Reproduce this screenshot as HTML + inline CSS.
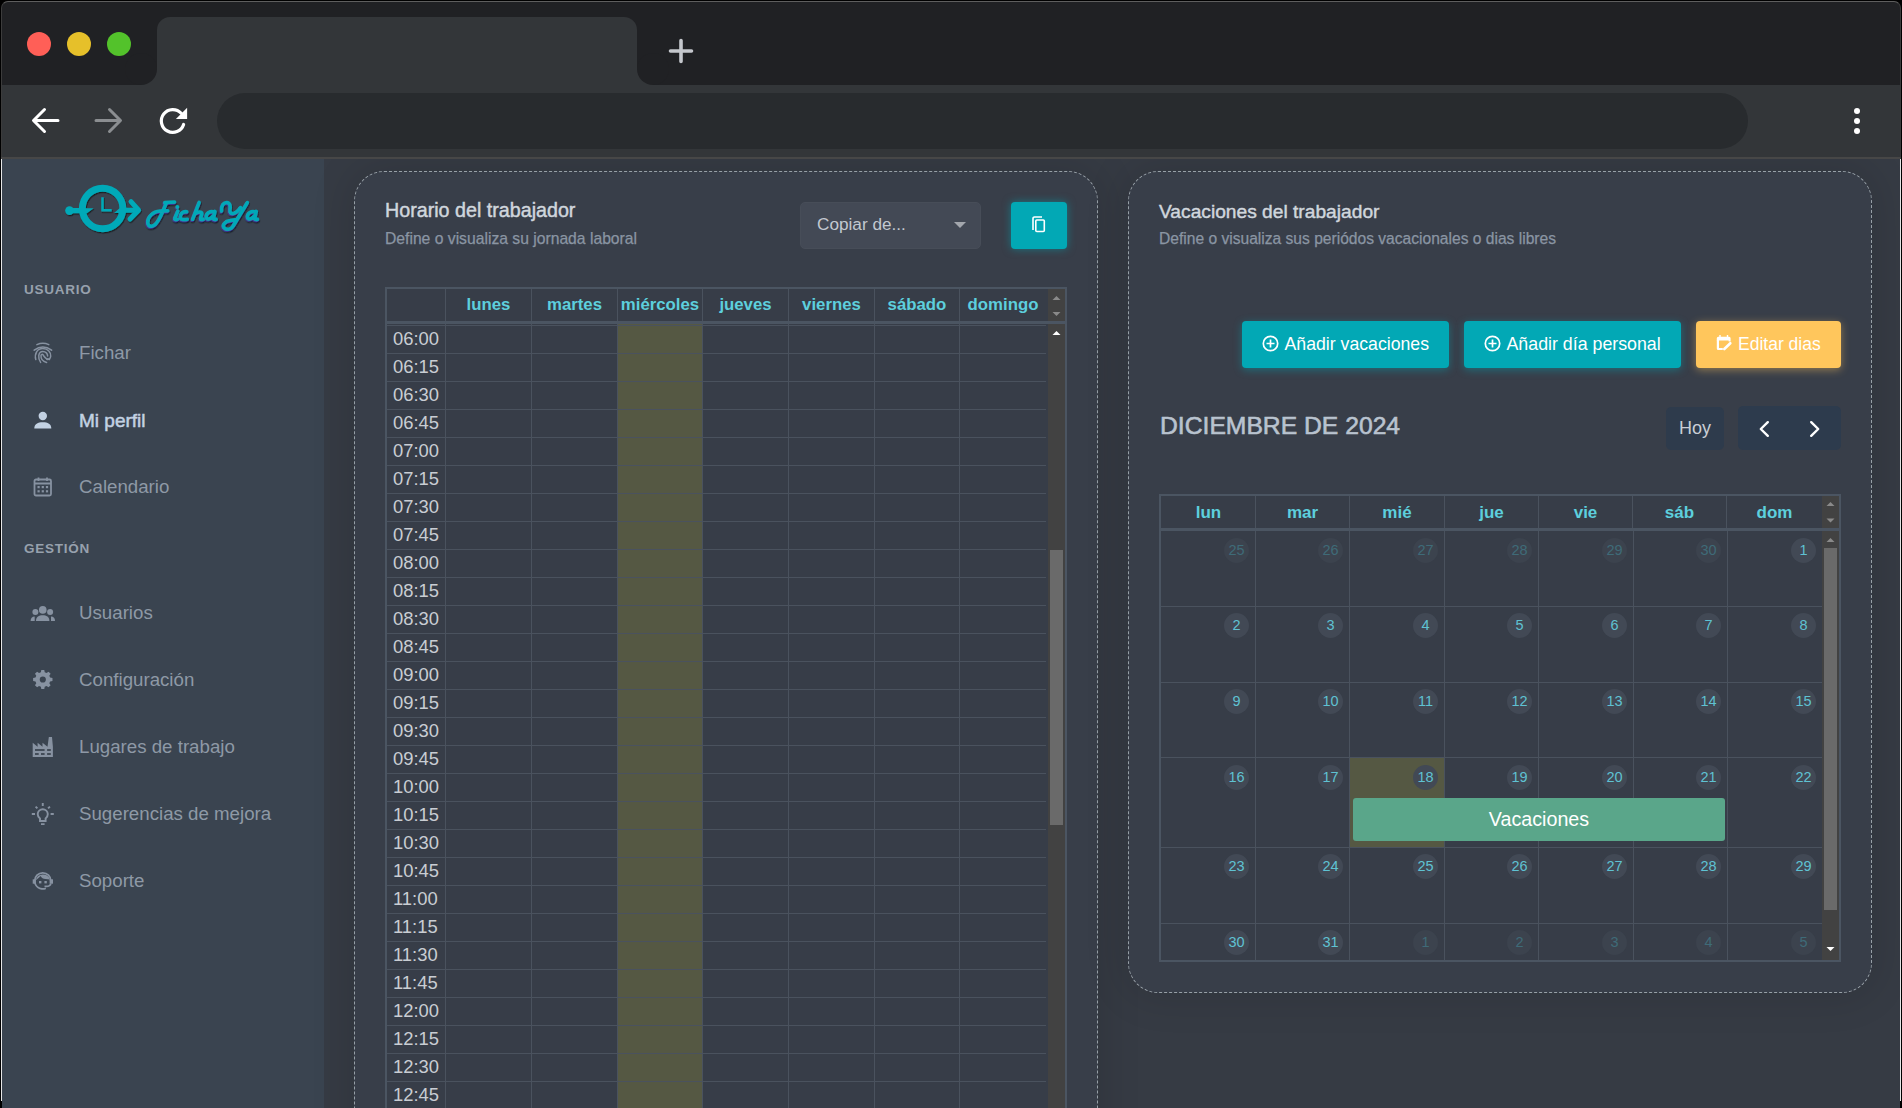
<!DOCTYPE html><html><head><meta charset="utf-8"><style>
*{box-sizing:border-box}
html,body{margin:0;padding:0}
body{width:1902px;height:1108px;background:#000;overflow:hidden;position:relative;font-family:"Liberation Sans",sans-serif}
.a{position:absolute}
.t{position:absolute;white-space:nowrap;line-height:1}
</style></head><body>

<div class="a" style="left:1px;top:1px;width:1900px;height:1107px;border-radius:7px 7px 0 0;background:#202124;overflow:hidden;border-top:1px solid #5e5e5e;border-left:1px solid #3c3c3c;border-right:1px solid #3c3c3c">
</div>
<div class="a" style="z-index:10;left:27px;top:32px;width:24px;height:24px;border-radius:50%;background:#ff5f57"></div>
<div class="a" style="z-index:10;left:67px;top:32px;width:24px;height:24px;border-radius:50%;background:#e6c02a"></div>
<div class="a" style="z-index:10;left:107px;top:32px;width:24px;height:24px;border-radius:50%;background:#53c22b"></div>
<div class="a" style="z-index:10;left:157px;top:17px;width:480px;height:70px;background:#333639;border-radius:13px 13px 0 0"></div>
<div class="a" style="z-index:10;left:141px;top:69px;width:16px;height:16px;background:#333639"></div><div class="a" style="z-index:10;left:125px;top:53px;width:32px;height:32px;border-radius:50%;background:#202124"></div>
<div class="a" style="z-index:10;left:637px;top:69px;width:16px;height:16px;background:#333639"></div><div class="a" style="z-index:10;left:637px;top:53px;width:32px;height:32px;border-radius:50%;background:#202124"></div>
<svg class="a" style="z-index:10;left:667px;top:37px" width="28" height="28" viewBox="0 0 28 28"><path d="M14 3.5V24.5M3.5 14H24.5" stroke="#c4c7cc" stroke-width="3.6" stroke-linecap="round"/></svg>
<div class="a" style="z-index:10;left:2px;top:85px;width:1898px;height:72px;background:#333639"></div>
<div class="a" style="z-index:10;left:1px;top:157px;width:1900px;height:2px;background:#474747"></div>
<div class="a" style="z-index:10;left:217px;top:93px;width:1531px;height:56px;border-radius:28px;background:#282b2e"></div>
<svg class="a" style="z-index:10;left:28px;top:104px" width="34" height="34" viewBox="0 0 34 34"><path d="M30 16.5H6M16.5 5.5L5.5 16.5L16.5 27.5" fill="none" stroke="#fff" stroke-width="3" stroke-linecap="round" stroke-linejoin="round"/></svg>
<svg class="a" style="z-index:10;left:92px;top:104px" width="34" height="34" viewBox="0 0 34 34"><path d="M4 16.5H28M17.5 5.5L28.5 16.5L17.5 27.5" fill="none" stroke="#8b8e91" stroke-width="3" stroke-linecap="round" stroke-linejoin="round"/></svg>
<svg class="a" style="z-index:10;left:156px;top:104px" width="34" height="34" viewBox="0 0 34 34"><path d="M27.6 20.4A11.4 11.4 0 1 1 25.2 9.3" fill="none" stroke="#fff" stroke-width="3.2" stroke-linecap="round"/><path d="M31.1 3.7V15H19.9Z" fill="#fff"/></svg>
<div class="a" style="z-index:10;left:1854px;top:108px;width:6px;height:6px;border-radius:50%;background:#fff"></div>
<div class="a" style="z-index:10;left:1854px;top:118px;width:6px;height:6px;border-radius:50%;background:#fff"></div>
<div class="a" style="z-index:10;left:1854px;top:128px;width:6px;height:6px;border-radius:50%;background:#fff"></div>
<div class="a" style="left:2px;top:159px;width:1898px;height:949px;background:#363b44"></div>
<div class="a" style="left:1px;top:159px;width:1px;height:949px;background:#e6e6e6"></div>
<div class="a" style="left:1900px;top:159px;width:1px;height:942px;background:#e6e6e6"></div>
<div class="a" style="left:2px;top:159px;width:322px;height:949px;background:#3a4450"></div>
<svg class="a" style="left:40px;top:180px" width="240" height="60" viewBox="40 180 240 60">
<defs><filter id="sh" x="-20%" y="-30%" width="140%" height="160%"><feDropShadow dx="0.8" dy="1.2" stdDeviation="0.7" flood-color="#0c0f14" flood-opacity="0.75"/></filter>
<filter id="sh2" x="-20%" y="-30%" width="140%" height="160%"><feDropShadow dx="-0.6" dy="1" stdDeviation="0.2" flood-color="#4a3fc0" flood-opacity="0.6"/><feDropShadow dx="0.6" dy="1.4" stdDeviation="0.6" flood-color="#0c0f14" flood-opacity="0.7"/></filter></defs>
<g filter="url(#sh)" fill="#03a9b8" stroke="#03a9b8">
<circle cx="102.6" cy="208.5" r="20.25" fill="none" stroke-width="6.9"/>
<path d="M69.5 210.6H80M125 210.3H137" stroke-width="5.1" fill="none"/>
<circle cx="69.5" cy="210.6" r="4.3" stroke="none"/>
<path d="M131 201.6L138.6 210.2L130 219" stroke-width="5" fill="none" stroke-linecap="round" stroke-linejoin="round"/>
<path d="M102.5 197.3V210.3H111.7" stroke-width="2.5" fill="none"/>
<path d="M85 208.2H93.6L87 213.2H85Z M114 213H120.5V208.2H119.6Z" stroke="none"/>
</g>
<g filter="url(#sh2)" fill="none" stroke="#03a9b8" stroke-width="3.5" stroke-linecap="round" stroke-linejoin="round">
<path d="M164.8 202.6L174.6 202.1"/>
<path d="M166.2 203C163.5 210 160.5 218 156.5 223C153.5 227 148.5 227.5 147.8 223C147 217.5 152.5 211.5 160 211L167.8 210.7"/>
<path d="M177.9 211L174.8 218.3C174.5 219.5 175.5 219.8 177.5 219.4"/>
<circle cx="177.4" cy="206.9" r="1.9" fill="#03a9b8" stroke="none"/>
<path d="M186.8 211.8C182.5 210.8 180.3 214.5 180.3 217C180.3 219.6 183.5 220 187.3 219.2"/>
<path d="M199.2 202.4L192.6 219.3M194.6 214.3C196.5 211.8 202.3 210.8 201.9 213.8L200.6 218.5C200.4 219.6 201.8 219.8 203.2 219.4"/>
<path d="M214.3 212C210 210.6 206.2 213 206.2 216.8C206.2 220 210 219.6 213 216M215 211.4L213.5 218.4C213.3 219.5 214.8 219.7 216.2 219.3"/>
<path d="M221.6 211C221 205.5 223.8 202.2 226.8 202.4C230 202.6 230.6 206 230 209.2C229.4 212.6 231 214 233.6 213.4C236 212.8 238.5 210.5 240.5 207.5"/>
<path d="M247.4 202.5L233.2 226C231.2 229.6 226.2 230.2 224 227.6C222 225 225 221.2 230 220.6L236.5 219.6"/>
<path d="M255.6 212C251.2 210.6 247.4 213 247.4 216.8C247.4 220 251.2 219.6 254.2 216M256.3 211.4L254.8 218.4C254.6 219.5 256.1 219.7 257.5 219.3"/>
</g>
</svg>
<div class="t" style="left:24px;top:282.7px;font-size:13.5px;color:#97a1ad;font-weight:700;letter-spacing:0.75px;-webkit-text-stroke:0px #97a1ad">USUARIO</div>
<div class="t" style="left:24px;top:541.7px;font-size:13.5px;color:#97a1ad;font-weight:700;letter-spacing:0.75px;-webkit-text-stroke:0px #97a1ad">GESTIÓN</div>
<svg class="a" style="left:29px;top:340px" width="28" height="24" viewBox="0 0 28 24"><g fill="none" stroke="#8792a1" stroke-width="1.5" stroke-linecap="round"><path d="M7.9 4.6Q13.8 2 19.8 4.6"/><path d="M5.2 10.2Q13.8 3.6 22.6 10.2"/><path d="M6.8 19.6C5.2 13.5 8.3 8.6 13.8 8.6C19 8.6 22 12.2 21.7 16.2C21.5 18.8 19.5 19.8 17.8 19.2"/><path d="M11.6 22.4C8.8 18.8 8.8 11.6 13.8 11.6C16.8 11.6 18.7 13.6 18.6 16"/><path d="M17.6 22.4C13.4 21.4 11.8 18.2 12 15.4C12.2 14.2 13.4 14 14.2 15C15.2 16.4 15.6 18.8 20.5 19.6"/></g></svg>
<div class="t" style="left:79px;top:344.1px;font-size:18.7px;color:#8e99a6;font-weight:400;letter-spacing:0px;-webkit-text-stroke:0px #8e99a6">Fichar</div>
<svg class="a" style="left:29px;top:407px" width="28" height="24" viewBox="0 0 28 24"><circle cx="13.8" cy="9" r="4.2" fill="#c3d2e3"/><path d="M5.3 21.5C5.3 16.8 8.8 15.2 13.8 15.2S22.3 16.8 22.3 21.5Z" fill="#c3d2e3"/></svg>
<div class="t" style="left:79px;top:411.0px;font-size:19.0px;color:#c3d2e3;font-weight:400;letter-spacing:0px;-webkit-text-stroke:0.5px #c3d2e3">Mi perfil</div>
<svg class="a" style="left:29px;top:474px" width="28" height="24" viewBox="0 0 28 24"><rect x="5.5" y="5.5" width="16.5" height="16" rx="1.5" fill="none" stroke="#8792a1" stroke-width="1.8"/><path d="M5.5 9.5H22" stroke="#8792a1" stroke-width="2"/><path d="M9.5 3.5V7M18 3.5V7" stroke="#8792a1" stroke-width="1.8"/><g fill="#8792a1"><rect x="8.5" y="12" width="2.2" height="2.2"/><rect x="12.7" y="12" width="2.2" height="2.2"/><rect x="16.9" y="12" width="2.2" height="2.2"/><rect x="8.5" y="16.2" width="2.2" height="2.2"/><rect x="12.7" y="16.2" width="2.2" height="2.2"/><rect x="16.9" y="16.2" width="2.2" height="2.2"/></g></svg>
<div class="t" style="left:79px;top:478.1px;font-size:18.7px;color:#8e99a6;font-weight:400;letter-spacing:0px;-webkit-text-stroke:0px #8e99a6">Calendario</div>
<svg class="a" style="left:29px;top:600px" width="28" height="24" viewBox="0 0 28 24"><g fill="#8792a1"><circle cx="13.76" cy="9.9" r="3.8"/><circle cx="6.4" cy="11.9" r="3"/><circle cx="21.1" cy="11.9" r="3"/><path d="M7 21C7 16.6 10 15.3 13.7 15.3S20.4 16.6 20.4 21Z"/><path d="M1.6 21C1.6 18.2 3 16.5 5.7 16.5V21Z"/><path d="M26 21C26 18.2 24.6 16.5 22 16.5V21Z"/></g></svg>
<div class="t" style="left:79px;top:604.1px;font-size:18.7px;color:#8e99a6;font-weight:400;letter-spacing:0px;-webkit-text-stroke:0px #8e99a6">Usuarios</div>
<svg class="a" style="left:29px;top:667px" width="28" height="24" viewBox="0 0 28 24"><path fill="#8792a1" fill-rule="evenodd" d="M8.3 1H11.7L12.2 3.6L14.3 4.5L16.5 3L18.9 5.4L17.4 7.6L18.3 9.7L21 10.2V13.6L18.3 14.1L17.4 16.2L18.9 18.4L16.5 20.8L14.3 19.3L12.2 20.2L11.7 22.8H8.3L7.8 20.2L5.7 19.3L3.5 20.8L1.1 18.4L2.6 16.2L1.7 14.1L-1 13.6V10.2L1.7 9.7L2.6 7.6L1.1 5.4L3.5 3L5.7 4.5L7.8 3.6Z M10 8.4A3.5 3.5 0 1 0 10 15.4A3.5 3.5 0 1 0 10 8.4Z" transform="translate(5 2) scale(0.88)"/></svg>
<div class="t" style="left:79px;top:671.1px;font-size:18.7px;color:#8e99a6;font-weight:400;letter-spacing:0px;-webkit-text-stroke:0px #8e99a6">Configuración</div>
<svg class="a" style="left:29px;top:734px" width="28" height="24" viewBox="0 0 28 24"><path fill="#8792a1" d="M3.7 22.9V8.8L8.6 12.8V8.8L13.5 12.8V8.8L18.5 12.8L19.85 3H23L23.9 12.8V22.9Z"/><g fill="#343c47"><rect x="6" y="15.2" width="9.6" height="1.6"/><rect x="18.1" y="15.2" width="3.7" height="1.6"/><rect x="6" y="19.2" width="3.7" height="1.6"/><rect x="12" y="19.2" width="3.6" height="1.6"/><rect x="18.1" y="19.2" width="3.7" height="1.6"/></g></svg>
<div class="t" style="left:79px;top:738.1px;font-size:18.7px;color:#8e99a6;font-weight:400;letter-spacing:0px;-webkit-text-stroke:0px #8e99a6">Lugares de trabajo</div>
<svg class="a" style="left:29px;top:801px" width="28" height="24" viewBox="0 0 28 24"><g fill="none" stroke="#8792a1" stroke-width="1.9"><path d="M11 20V17.5C9.5 16.3 8.7 14.8 8.7 13A5.06 5.06 0 0 1 18.8 13C18.8 14.8 18 16.3 16.6 17.5V20Z"/><path d="M12 23.2H15.6"/><path d="M13.76 2V5M2.8 13H6M21.6 13H24.8M6.6 5.6L8.4 7.4M20.9 5.6L19.1 7.4"/></g></svg>
<div class="t" style="left:79px;top:805.1px;font-size:18.7px;color:#8e99a6;font-weight:400;letter-spacing:0px;-webkit-text-stroke:0px #8e99a6">Sugerencias de mejora</div>
<svg class="a" style="left:29px;top:868px" width="28" height="24" viewBox="0 0 28 24"><g fill="#8792a1"><path d="M13.76 3.9A9 9 0 0 0 4.76 12.9A9 9 0 0 0 16.9 21.2V19.4A7.2 7.2 0 0 1 6.56 12.9A7.2 7.2 0 0 1 20.96 12.9H22.76A9 9 0 0 0 13.76 3.9Z"/><path d="M6.7 12.2C8.6 11 10 9.8 11.5 8C12.6 10 14.2 10.8 16.5 11L21 11.4A7.5 7.5 0 0 0 6.7 12.2Z"/><rect x="10" y="13" width="2.4" height="2.4"/><rect x="15.4" y="13" width="2.4" height="2.4"/><rect x="3.7" y="11.3" width="3.2" height="4.4"/><rect x="20.6" y="11.3" width="3.4" height="4.4"/><path d="M21 15.5C20.5 17.3 19 17.6 17.5 17.6H15.5V19.2H17.5C20 19.2 22.5 18 22.7 15.5Z"/></g></svg>
<div class="t" style="left:79px;top:872.1px;font-size:18.7px;color:#8e99a6;font-weight:400;letter-spacing:0px;-webkit-text-stroke:0px #8e99a6">Soporte</div>
<div class="a" style="left:354px;top:171px;width:744px;height:1000px;background:#383e49;border:1px dashed #97a0a7;border-radius:30px;box-shadow:0 0 40px 4px rgba(0,0,0,0.12)"></div>
<div class="a" style="left:1128px;top:171px;width:744px;height:822px;background:#383e49;border:1px dashed #97a0a7;border-radius:30px;box-shadow:0 0 40px 4px rgba(0,0,0,0.12)"></div>
<div class="t" style="left:385px;top:201.4px;font-size:19.7px;color:#d0d6dd;font-weight:400;letter-spacing:0px;-webkit-text-stroke:0.45px #d0d6dd">Horario del trabajador</div>
<div class="t" style="left:385px;top:230.5px;font-size:15.7px;color:#8a95a3;font-weight:400;letter-spacing:0px;-webkit-text-stroke:0.25px #8a95a3">Define o visualiza su jornada laboral</div>
<div class="a" style="left:800px;top:202px;width:181px;height:47px;background:#434955;border:1px solid #474d58;border-radius:5px"></div>
<div class="t" style="left:817px;top:215.8px;font-size:17.2px;color:#c2c8d0;font-weight:400;letter-spacing:0px;-webkit-text-stroke:0px #c2c8d0">Copiar de...</div>
<svg class="a" style="left:953px;top:221px" width="14" height="8" viewBox="0 0 14 8"><path d="M1 1H13L7 7Z" fill="#a3a7ad"/></svg>
<div class="a" style="left:1011px;top:202px;width:56px;height:47px;background:#02a8b5;border-radius:4px;box-shadow:0 0 8px rgba(2,168,181,0.55)"></div>
<svg class="a" style="left:1029px;top:215px" width="20" height="20" viewBox="0 0 20 20"><path d="M4 15V3.5A1.5 1.5 0 0 1 5.5 2H13" fill="none" stroke="#fff" stroke-width="1.6"/><rect x="6.8" y="5" width="8.5" height="11.5" rx="1" fill="none" stroke="#fff" stroke-width="1.6"/></svg>
<div class="a" style="left:385px;top:287px;width:682px;height:830px;border:2px solid #4b5562;border-bottom:none;background:#373d48"></div>
<div class="a" style="left:1048px;top:289px;width:17px;height:32px;background:#424242"></div>
<svg class="a" style="left:1051px;top:294px" width="11" height="24" viewBox="0 0 11 24"><path d="M1.5 6H9.5L5.5 2Z M1.5 18H9.5L5.5 22Z" fill="#8a8a8a"/></svg>
<div class="a" style="left:387px;top:321px;width:678px;height:3px;background:#4b5562"></div>
<div class="a" style="left:618px;top:324px;width:84px;height:800px;background:#555843"></div>
<div class="a" style="left:445px;top:289px;width:1px;height:32px;background:#4a525e"></div>
<div class="a" style="left:445px;top:324px;width:1px;height:800px;background:#4a525e"></div>
<div class="a" style="left:531px;top:289px;width:1px;height:32px;background:#4a525e"></div>
<div class="a" style="left:531px;top:324px;width:1px;height:800px;background:#4a525e"></div>
<div class="a" style="left:617px;top:289px;width:1px;height:32px;background:#4a525e"></div>
<div class="a" style="left:617px;top:324px;width:1px;height:800px;background:#4a525e"></div>
<div class="a" style="left:702px;top:289px;width:1px;height:32px;background:#4a525e"></div>
<div class="a" style="left:702px;top:324px;width:1px;height:800px;background:#4a525e"></div>
<div class="a" style="left:788px;top:289px;width:1px;height:32px;background:#4a525e"></div>
<div class="a" style="left:788px;top:324px;width:1px;height:800px;background:#4a525e"></div>
<div class="a" style="left:874px;top:289px;width:1px;height:32px;background:#4a525e"></div>
<div class="a" style="left:874px;top:324px;width:1px;height:800px;background:#4a525e"></div>
<div class="a" style="left:959px;top:289px;width:1px;height:32px;background:#4a525e"></div>
<div class="a" style="left:959px;top:324px;width:1px;height:800px;background:#4a525e"></div>
<div class="t" style="left:428.5px;width:120px;text-align:center;top:297px;font-size:16.8px;font-weight:700;color:#5dcfdd">lunes</div>
<div class="t" style="left:514.5px;width:120px;text-align:center;top:297px;font-size:16.8px;font-weight:700;color:#5dcfdd">martes</div>
<div class="t" style="left:600.0px;width:120px;text-align:center;top:297px;font-size:16.8px;font-weight:700;color:#5dcfdd">miércoles</div>
<div class="t" style="left:685.5px;width:120px;text-align:center;top:297px;font-size:16.8px;font-weight:700;color:#5dcfdd">jueves</div>
<div class="t" style="left:771.5px;width:120px;text-align:center;top:297px;font-size:16.8px;font-weight:700;color:#5dcfdd">viernes</div>
<div class="t" style="left:857.0px;width:120px;text-align:center;top:297px;font-size:16.8px;font-weight:700;color:#5dcfdd">sábado</div>
<div class="t" style="left:943.0px;width:120px;text-align:center;top:297px;font-size:16.8px;font-weight:700;color:#5dcfdd">domingo</div>
<div class="a" style="left:387px;top:325px;width:659px;height:1px;background:#4a525e"></div>
<div class="t" style="left:393px;top:329.8px;font-size:18.4px;color:#c9cdd3">06:00</div>
<div class="a" style="left:387px;top:353px;width:659px;height:1px;background:#4a525e"></div>
<div class="t" style="left:393px;top:357.8px;font-size:18.4px;color:#c9cdd3">06:15</div>
<div class="a" style="left:387px;top:381px;width:659px;height:1px;background:#4a525e"></div>
<div class="t" style="left:393px;top:385.8px;font-size:18.4px;color:#c9cdd3">06:30</div>
<div class="a" style="left:387px;top:409px;width:659px;height:1px;background:#4a525e"></div>
<div class="t" style="left:393px;top:413.8px;font-size:18.4px;color:#c9cdd3">06:45</div>
<div class="a" style="left:387px;top:437px;width:659px;height:1px;background:#4a525e"></div>
<div class="t" style="left:393px;top:441.8px;font-size:18.4px;color:#c9cdd3">07:00</div>
<div class="a" style="left:387px;top:465px;width:659px;height:1px;background:#4a525e"></div>
<div class="t" style="left:393px;top:469.8px;font-size:18.4px;color:#c9cdd3">07:15</div>
<div class="a" style="left:387px;top:493px;width:659px;height:1px;background:#4a525e"></div>
<div class="t" style="left:393px;top:497.8px;font-size:18.4px;color:#c9cdd3">07:30</div>
<div class="a" style="left:387px;top:521px;width:659px;height:1px;background:#4a525e"></div>
<div class="t" style="left:393px;top:525.8px;font-size:18.4px;color:#c9cdd3">07:45</div>
<div class="a" style="left:387px;top:549px;width:659px;height:1px;background:#4a525e"></div>
<div class="t" style="left:393px;top:553.8px;font-size:18.4px;color:#c9cdd3">08:00</div>
<div class="a" style="left:387px;top:577px;width:659px;height:1px;background:#4a525e"></div>
<div class="t" style="left:393px;top:581.8px;font-size:18.4px;color:#c9cdd3">08:15</div>
<div class="a" style="left:387px;top:605px;width:659px;height:1px;background:#4a525e"></div>
<div class="t" style="left:393px;top:609.8px;font-size:18.4px;color:#c9cdd3">08:30</div>
<div class="a" style="left:387px;top:633px;width:659px;height:1px;background:#4a525e"></div>
<div class="t" style="left:393px;top:637.8px;font-size:18.4px;color:#c9cdd3">08:45</div>
<div class="a" style="left:387px;top:661px;width:659px;height:1px;background:#4a525e"></div>
<div class="t" style="left:393px;top:665.8px;font-size:18.4px;color:#c9cdd3">09:00</div>
<div class="a" style="left:387px;top:689px;width:659px;height:1px;background:#4a525e"></div>
<div class="t" style="left:393px;top:693.8px;font-size:18.4px;color:#c9cdd3">09:15</div>
<div class="a" style="left:387px;top:717px;width:659px;height:1px;background:#4a525e"></div>
<div class="t" style="left:393px;top:721.8px;font-size:18.4px;color:#c9cdd3">09:30</div>
<div class="a" style="left:387px;top:745px;width:659px;height:1px;background:#4a525e"></div>
<div class="t" style="left:393px;top:749.8px;font-size:18.4px;color:#c9cdd3">09:45</div>
<div class="a" style="left:387px;top:773px;width:659px;height:1px;background:#4a525e"></div>
<div class="t" style="left:393px;top:777.8px;font-size:18.4px;color:#c9cdd3">10:00</div>
<div class="a" style="left:387px;top:801px;width:659px;height:1px;background:#4a525e"></div>
<div class="t" style="left:393px;top:805.8px;font-size:18.4px;color:#c9cdd3">10:15</div>
<div class="a" style="left:387px;top:829px;width:659px;height:1px;background:#4a525e"></div>
<div class="t" style="left:393px;top:833.8px;font-size:18.4px;color:#c9cdd3">10:30</div>
<div class="a" style="left:387px;top:857px;width:659px;height:1px;background:#4a525e"></div>
<div class="t" style="left:393px;top:861.8px;font-size:18.4px;color:#c9cdd3">10:45</div>
<div class="a" style="left:387px;top:885px;width:659px;height:1px;background:#4a525e"></div>
<div class="t" style="left:393px;top:889.8px;font-size:18.4px;color:#c9cdd3">11:00</div>
<div class="a" style="left:387px;top:913px;width:659px;height:1px;background:#4a525e"></div>
<div class="t" style="left:393px;top:917.8px;font-size:18.4px;color:#c9cdd3">11:15</div>
<div class="a" style="left:387px;top:941px;width:659px;height:1px;background:#4a525e"></div>
<div class="t" style="left:393px;top:945.8px;font-size:18.4px;color:#c9cdd3">11:30</div>
<div class="a" style="left:387px;top:969px;width:659px;height:1px;background:#4a525e"></div>
<div class="t" style="left:393px;top:973.8px;font-size:18.4px;color:#c9cdd3">11:45</div>
<div class="a" style="left:387px;top:997px;width:659px;height:1px;background:#4a525e"></div>
<div class="t" style="left:393px;top:1001.8px;font-size:18.4px;color:#c9cdd3">12:00</div>
<div class="a" style="left:387px;top:1025px;width:659px;height:1px;background:#4a525e"></div>
<div class="t" style="left:393px;top:1029.8px;font-size:18.4px;color:#c9cdd3">12:15</div>
<div class="a" style="left:387px;top:1053px;width:659px;height:1px;background:#4a525e"></div>
<div class="t" style="left:393px;top:1057.8px;font-size:18.4px;color:#c9cdd3">12:30</div>
<div class="a" style="left:387px;top:1081px;width:659px;height:1px;background:#4a525e"></div>
<div class="t" style="left:393px;top:1085.8px;font-size:18.4px;color:#c9cdd3">12:45</div>
<div class="a" style="left:1048px;top:324px;width:17px;height:790px;background:#424242"></div>
<svg class="a" style="left:1051px;top:328px" width="11" height="9" viewBox="0 0 11 9"><path d="M1.5 7H9.5L5.5 3Z" fill="#fff"/></svg>
<div class="a" style="left:1050px;top:550px;width:13px;height:275px;background:#6a6a6a"></div>
<div class="t" style="left:1159px;top:201.5px;font-size:19.2px;color:#d0d6dd;font-weight:400;letter-spacing:0px;-webkit-text-stroke:0.45px #d0d6dd">Vacaciones del trabajador</div>
<div class="t" style="left:1159px;top:230.5px;font-size:15.6px;color:#8a95a3;font-weight:400;letter-spacing:0px;-webkit-text-stroke:0.25px #8a95a3">Define o visualiza sus periódos vacacionales o dias libres</div>
<div class="a" style="left:1242px;top:321px;width:207px;height:47px;background:#02a8b5;border-radius:4px;box-shadow:0 2px 8px rgba(2,168,181,0.45)"></div>
<svg class="a" style="left:1262px;top:335px" width="17" height="17" viewBox="0 0 17 17"><circle cx="8.5" cy="8.5" r="7.2" fill="none" stroke="#fff" stroke-width="1.7"/><path d="M8.5 4.5V12.5M4.5 8.5H12.5" stroke="#fff" stroke-width="1.7"/></svg>
<div class="t" style="left:1284.5px;top:335.7px;font-size:17.7px;color:#fff;font-weight:400;letter-spacing:0px;-webkit-text-stroke:0px #fff">Añadir vacaciones</div>
<div class="a" style="left:1464px;top:321px;width:217px;height:47px;background:#02a8b5;border-radius:4px;box-shadow:0 2px 8px rgba(2,168,181,0.45)"></div>
<svg class="a" style="left:1484px;top:335px" width="17" height="17" viewBox="0 0 17 17"><circle cx="8.5" cy="8.5" r="7.2" fill="none" stroke="#fff" stroke-width="1.7"/><path d="M8.5 4.5V12.5M4.5 8.5H12.5" stroke="#fff" stroke-width="1.7"/></svg>
<div class="t" style="left:1506.5px;top:335.7px;font-size:17.8px;color:#fff;font-weight:400;letter-spacing:0px;-webkit-text-stroke:0px #fff">Añadir día personal</div>
<div class="a" style="left:1696px;top:321px;width:145px;height:47px;background:#ffc65c;border-radius:4px;box-shadow:0 2px 8px rgba(255,198,92,0.45)"></div>
<svg class="a" style="left:1715px;top:333px" width="18" height="19" viewBox="0 0 18 19"><g fill="#fff"><path d="M1.8 8V5.2Q1.8 3.7 3.3 3.7H14.1Q15.6 3.7 15.6 5.2V8.6H13.6V7.5H1.8Z"/><rect x="4.3" y="2" width="1.4" height="2.5"/><rect x="11.8" y="2" width="1.4" height="2.5"/><path d="M1.8 7H4V15H7.8V17H3.3Q1.8 17 1.8 15.5Z"/></g><path d="M9.3 16L15.3 10.2" stroke="#fff" stroke-width="2.6" stroke-linecap="round"/></svg>
<div class="t" style="left:1738px;top:335.7px;font-size:17.5px;color:#fff;font-weight:400;letter-spacing:0px;-webkit-text-stroke:0px #fff">Editar dias</div>
<div class="t" style="left:1160px;top:413.8px;font-size:24.7px;color:#b9c3cf;font-weight:400;letter-spacing:0px;-webkit-text-stroke:0.6px #b9c3cf">DICIEMBRE DE 2024</div>
<div class="a" style="left:1666px;top:407px;width:58px;height:43px;background:#2e3b4c;border-radius:5px"></div>
<div class="t" style="left:1679px;top:418.7px;font-size:18px;color:#c9ced5;font-weight:400;letter-spacing:0px;-webkit-text-stroke:0px #c9ced5">Hoy</div>
<div class="a" style="left:1738px;top:406px;width:103px;height:44px;background:#2d3b4d;border-radius:5px"></div>
<svg class="a" style="left:1754px;top:418px" width="20" height="22" viewBox="0 0 20 22"><path d="M13.8 4.2L6.8 11L13.8 17.8" fill="none" stroke="#fff" stroke-width="2.4" stroke-linecap="round" stroke-linejoin="round"/></svg>
<svg class="a" style="left:1805px;top:418px" width="20" height="22" viewBox="0 0 20 22"><path d="M6.2 4.2L13.2 11L6.2 17.8" fill="none" stroke="#fff" stroke-width="2.4" stroke-linecap="round" stroke-linejoin="round"/></svg>
<div class="a" style="left:1159px;top:494px;width:682px;height:468px;border:2px solid #4b5562;background:#373d48"></div>
<div class="a" style="left:1822px;top:496px;width:17px;height:32px;background:#424242"></div>
<svg class="a" style="left:1825px;top:500px" width="11" height="24" viewBox="0 0 11 24"><path d="M1.5 6H9.5L5.5 2Z M1.5 18.5H9.5L5.5 22.5Z" fill="#8a8a8a"/></svg>
<div class="a" style="left:1161px;top:528px;width:678px;height:3px;background:#4b5562"></div>
<div class="a" style="left:1350px;top:758px;width:94px;height:89px;background:#555843"></div>
<div class="a" style="left:1255px;top:496px;width:1px;height:32px;background:#4a525e"></div>
<div class="a" style="left:1349px;top:496px;width:1px;height:32px;background:#4a525e"></div>
<div class="a" style="left:1444px;top:496px;width:1px;height:32px;background:#4a525e"></div>
<div class="a" style="left:1538px;top:496px;width:1px;height:32px;background:#4a525e"></div>
<div class="a" style="left:1632px;top:496px;width:1px;height:32px;background:#4a525e"></div>
<div class="a" style="left:1726px;top:496px;width:1px;height:32px;background:#4a525e"></div>
<div class="a" style="left:1255px;top:531px;width:1px;height:429px;background:#4a525e"></div>
<div class="a" style="left:1349px;top:531px;width:1px;height:429px;background:#4a525e"></div>
<div class="a" style="left:1444px;top:531px;width:1px;height:429px;background:#4a525e"></div>
<div class="a" style="left:1538px;top:531px;width:1px;height:429px;background:#4a525e"></div>
<div class="a" style="left:1633px;top:531px;width:1px;height:429px;background:#4a525e"></div>
<div class="a" style="left:1727px;top:531px;width:1px;height:429px;background:#4a525e"></div>
<div class="a" style="left:1161px;top:606px;width:661px;height:1px;background:#4a525e"></div>
<div class="a" style="left:1161px;top:682px;width:661px;height:1px;background:#4a525e"></div>
<div class="a" style="left:1161px;top:757px;width:661px;height:1px;background:#4a525e"></div>
<div class="a" style="left:1161px;top:847px;width:661px;height:1px;background:#4a525e"></div>
<div class="a" style="left:1161px;top:923px;width:661px;height:1px;background:#4a525e"></div>
<div class="t" style="left:1158.5px;width:100px;text-align:center;top:504px;font-size:17px;font-weight:700;color:#5dcfdd">lun</div>
<div class="t" style="left:1252.5px;width:100px;text-align:center;top:504px;font-size:17px;font-weight:700;color:#5dcfdd">mar</div>
<div class="t" style="left:1347.0px;width:100px;text-align:center;top:504px;font-size:17px;font-weight:700;color:#5dcfdd">mié</div>
<div class="t" style="left:1441.5px;width:100px;text-align:center;top:504px;font-size:17px;font-weight:700;color:#5dcfdd">jue</div>
<div class="t" style="left:1535.5px;width:100px;text-align:center;top:504px;font-size:17px;font-weight:700;color:#5dcfdd">vie</div>
<div class="t" style="left:1629.5px;width:100px;text-align:center;top:504px;font-size:17px;font-weight:700;color:#5dcfdd">sáb</div>
<div class="t" style="left:1724.5px;width:100px;text-align:center;top:504px;font-size:17px;font-weight:700;color:#5dcfdd">dom</div>
<div class="a" style="left:1224.0px;top:538.0px;width:25px;height:25px;border-radius:50%;background:#3c434e"></div>
<div class="t" style="left:1216.5px;width:40px;text-align:center;top:543.0px;font-size:14.5px;color:#3f6b78">25</div>
<div class="a" style="left:1318.0px;top:538.0px;width:25px;height:25px;border-radius:50%;background:#3c434e"></div>
<div class="t" style="left:1310.5px;width:40px;text-align:center;top:543.0px;font-size:14.5px;color:#3f6b78">26</div>
<div class="a" style="left:1413.0px;top:538.0px;width:25px;height:25px;border-radius:50%;background:#3c434e"></div>
<div class="t" style="left:1405.5px;width:40px;text-align:center;top:543.0px;font-size:14.5px;color:#3f6b78">27</div>
<div class="a" style="left:1507.0px;top:538.0px;width:25px;height:25px;border-radius:50%;background:#3c434e"></div>
<div class="t" style="left:1499.5px;width:40px;text-align:center;top:543.0px;font-size:14.5px;color:#3f6b78">28</div>
<div class="a" style="left:1602.0px;top:538.0px;width:25px;height:25px;border-radius:50%;background:#3c434e"></div>
<div class="t" style="left:1594.5px;width:40px;text-align:center;top:543.0px;font-size:14.5px;color:#3f6b78">29</div>
<div class="a" style="left:1696.0px;top:538.0px;width:25px;height:25px;border-radius:50%;background:#3c434e"></div>
<div class="t" style="left:1688.5px;width:40px;text-align:center;top:543.0px;font-size:14.5px;color:#3f6b78">30</div>
<div class="a" style="left:1791.0px;top:538.0px;width:25px;height:25px;border-radius:50%;background:#424955"></div>
<div class="t" style="left:1783.5px;width:40px;text-align:center;top:543.0px;font-size:14.5px;color:#5fc2d2">1</div>
<div class="a" style="left:1224.0px;top:613.0px;width:25px;height:25px;border-radius:50%;background:#424955"></div>
<div class="t" style="left:1216.5px;width:40px;text-align:center;top:618.0px;font-size:14.5px;color:#5fc2d2">2</div>
<div class="a" style="left:1318.0px;top:613.0px;width:25px;height:25px;border-radius:50%;background:#424955"></div>
<div class="t" style="left:1310.5px;width:40px;text-align:center;top:618.0px;font-size:14.5px;color:#5fc2d2">3</div>
<div class="a" style="left:1413.0px;top:613.0px;width:25px;height:25px;border-radius:50%;background:#424955"></div>
<div class="t" style="left:1405.5px;width:40px;text-align:center;top:618.0px;font-size:14.5px;color:#5fc2d2">4</div>
<div class="a" style="left:1507.0px;top:613.0px;width:25px;height:25px;border-radius:50%;background:#424955"></div>
<div class="t" style="left:1499.5px;width:40px;text-align:center;top:618.0px;font-size:14.5px;color:#5fc2d2">5</div>
<div class="a" style="left:1602.0px;top:613.0px;width:25px;height:25px;border-radius:50%;background:#424955"></div>
<div class="t" style="left:1594.5px;width:40px;text-align:center;top:618.0px;font-size:14.5px;color:#5fc2d2">6</div>
<div class="a" style="left:1696.0px;top:613.0px;width:25px;height:25px;border-radius:50%;background:#424955"></div>
<div class="t" style="left:1688.5px;width:40px;text-align:center;top:618.0px;font-size:14.5px;color:#5fc2d2">7</div>
<div class="a" style="left:1791.0px;top:613.0px;width:25px;height:25px;border-radius:50%;background:#424955"></div>
<div class="t" style="left:1783.5px;width:40px;text-align:center;top:618.0px;font-size:14.5px;color:#5fc2d2">8</div>
<div class="a" style="left:1224.0px;top:689.0px;width:25px;height:25px;border-radius:50%;background:#424955"></div>
<div class="t" style="left:1216.5px;width:40px;text-align:center;top:694.0px;font-size:14.5px;color:#5fc2d2">9</div>
<div class="a" style="left:1318.0px;top:689.0px;width:25px;height:25px;border-radius:50%;background:#424955"></div>
<div class="t" style="left:1310.5px;width:40px;text-align:center;top:694.0px;font-size:14.5px;color:#5fc2d2">10</div>
<div class="a" style="left:1413.0px;top:689.0px;width:25px;height:25px;border-radius:50%;background:#424955"></div>
<div class="t" style="left:1405.5px;width:40px;text-align:center;top:694.0px;font-size:14.5px;color:#5fc2d2">11</div>
<div class="a" style="left:1507.0px;top:689.0px;width:25px;height:25px;border-radius:50%;background:#424955"></div>
<div class="t" style="left:1499.5px;width:40px;text-align:center;top:694.0px;font-size:14.5px;color:#5fc2d2">12</div>
<div class="a" style="left:1602.0px;top:689.0px;width:25px;height:25px;border-radius:50%;background:#424955"></div>
<div class="t" style="left:1594.5px;width:40px;text-align:center;top:694.0px;font-size:14.5px;color:#5fc2d2">13</div>
<div class="a" style="left:1696.0px;top:689.0px;width:25px;height:25px;border-radius:50%;background:#424955"></div>
<div class="t" style="left:1688.5px;width:40px;text-align:center;top:694.0px;font-size:14.5px;color:#5fc2d2">14</div>
<div class="a" style="left:1791.0px;top:689.0px;width:25px;height:25px;border-radius:50%;background:#424955"></div>
<div class="t" style="left:1783.5px;width:40px;text-align:center;top:694.0px;font-size:14.5px;color:#5fc2d2">15</div>
<div class="a" style="left:1224.0px;top:764.8px;width:25px;height:25px;border-radius:50%;background:#424955"></div>
<div class="t" style="left:1216.5px;width:40px;text-align:center;top:769.8px;font-size:14.5px;color:#5fc2d2">16</div>
<div class="a" style="left:1318.0px;top:764.8px;width:25px;height:25px;border-radius:50%;background:#424955"></div>
<div class="t" style="left:1310.5px;width:40px;text-align:center;top:769.8px;font-size:14.5px;color:#5fc2d2">17</div>
<div class="a" style="left:1413.0px;top:764.8px;width:25px;height:25px;border-radius:50%;background:#424955"></div>
<div class="t" style="left:1405.5px;width:40px;text-align:center;top:769.8px;font-size:14.5px;color:#5fc2d2">18</div>
<div class="a" style="left:1507.0px;top:764.8px;width:25px;height:25px;border-radius:50%;background:#424955"></div>
<div class="t" style="left:1499.5px;width:40px;text-align:center;top:769.8px;font-size:14.5px;color:#5fc2d2">19</div>
<div class="a" style="left:1602.0px;top:764.8px;width:25px;height:25px;border-radius:50%;background:#424955"></div>
<div class="t" style="left:1594.5px;width:40px;text-align:center;top:769.8px;font-size:14.5px;color:#5fc2d2">20</div>
<div class="a" style="left:1696.0px;top:764.8px;width:25px;height:25px;border-radius:50%;background:#424955"></div>
<div class="t" style="left:1688.5px;width:40px;text-align:center;top:769.8px;font-size:14.5px;color:#5fc2d2">21</div>
<div class="a" style="left:1791.0px;top:764.8px;width:25px;height:25px;border-radius:50%;background:#424955"></div>
<div class="t" style="left:1783.5px;width:40px;text-align:center;top:769.8px;font-size:14.5px;color:#5fc2d2">22</div>
<div class="a" style="left:1224.0px;top:854.0px;width:25px;height:25px;border-radius:50%;background:#424955"></div>
<div class="t" style="left:1216.5px;width:40px;text-align:center;top:859.0px;font-size:14.5px;color:#5fc2d2">23</div>
<div class="a" style="left:1318.0px;top:854.0px;width:25px;height:25px;border-radius:50%;background:#424955"></div>
<div class="t" style="left:1310.5px;width:40px;text-align:center;top:859.0px;font-size:14.5px;color:#5fc2d2">24</div>
<div class="a" style="left:1413.0px;top:854.0px;width:25px;height:25px;border-radius:50%;background:#424955"></div>
<div class="t" style="left:1405.5px;width:40px;text-align:center;top:859.0px;font-size:14.5px;color:#5fc2d2">25</div>
<div class="a" style="left:1507.0px;top:854.0px;width:25px;height:25px;border-radius:50%;background:#424955"></div>
<div class="t" style="left:1499.5px;width:40px;text-align:center;top:859.0px;font-size:14.5px;color:#5fc2d2">26</div>
<div class="a" style="left:1602.0px;top:854.0px;width:25px;height:25px;border-radius:50%;background:#424955"></div>
<div class="t" style="left:1594.5px;width:40px;text-align:center;top:859.0px;font-size:14.5px;color:#5fc2d2">27</div>
<div class="a" style="left:1696.0px;top:854.0px;width:25px;height:25px;border-radius:50%;background:#424955"></div>
<div class="t" style="left:1688.5px;width:40px;text-align:center;top:859.0px;font-size:14.5px;color:#5fc2d2">28</div>
<div class="a" style="left:1791.0px;top:854.0px;width:25px;height:25px;border-radius:50%;background:#424955"></div>
<div class="t" style="left:1783.5px;width:40px;text-align:center;top:859.0px;font-size:14.5px;color:#5fc2d2">29</div>
<div class="a" style="left:1224.0px;top:930.0px;width:25px;height:25px;border-radius:50%;background:#424955"></div>
<div class="t" style="left:1216.5px;width:40px;text-align:center;top:935.0px;font-size:14.5px;color:#5fc2d2">30</div>
<div class="a" style="left:1318.0px;top:930.0px;width:25px;height:25px;border-radius:50%;background:#424955"></div>
<div class="t" style="left:1310.5px;width:40px;text-align:center;top:935.0px;font-size:14.5px;color:#5fc2d2">31</div>
<div class="a" style="left:1413.0px;top:930.0px;width:25px;height:25px;border-radius:50%;background:#3c434e"></div>
<div class="t" style="left:1405.5px;width:40px;text-align:center;top:935.0px;font-size:14.5px;color:#3f6b78">1</div>
<div class="a" style="left:1507.0px;top:930.0px;width:25px;height:25px;border-radius:50%;background:#3c434e"></div>
<div class="t" style="left:1499.5px;width:40px;text-align:center;top:935.0px;font-size:14.5px;color:#3f6b78">2</div>
<div class="a" style="left:1602.0px;top:930.0px;width:25px;height:25px;border-radius:50%;background:#3c434e"></div>
<div class="t" style="left:1594.5px;width:40px;text-align:center;top:935.0px;font-size:14.5px;color:#3f6b78">3</div>
<div class="a" style="left:1696.0px;top:930.0px;width:25px;height:25px;border-radius:50%;background:#3c434e"></div>
<div class="t" style="left:1688.5px;width:40px;text-align:center;top:935.0px;font-size:14.5px;color:#3f6b78">4</div>
<div class="a" style="left:1791.0px;top:930.0px;width:25px;height:25px;border-radius:50%;background:#3c434e"></div>
<div class="t" style="left:1783.5px;width:40px;text-align:center;top:935.0px;font-size:14.5px;color:#3f6b78">5</div>
<div class="a" style="left:1353px;top:798px;width:372px;height:43px;background:#5aa68a;border-radius:3px"></div>
<div class="t" style="left:1353px;width:372px;text-align:center;top:810px;font-size:19.7px;color:#fff">Vacaciones</div>
<div class="a" style="left:1822px;top:531px;width:17px;height:429px;background:#424242"></div>
<svg class="a" style="left:1825px;top:535px" width="11" height="9" viewBox="0 0 11 9"><path d="M1.5 7H9.5L5.5 3Z" fill="#8a8a8a"/></svg>
<svg class="a" style="left:1825px;top:945px" width="11" height="9" viewBox="0 0 11 9"><path d="M1.5 2H9.5L5.5 6Z" fill="#fff"/></svg>
<div class="a" style="left:1824px;top:548px;width:13px;height:362px;background:#6a6a6a"></div>
<div class="a" style="left:0;top:1101px;width:2px;height:7px;background:#000"></div><div class="a" style="left:1900px;top:1101px;width:2px;height:7px;background:#000"></div>
</body></html>
